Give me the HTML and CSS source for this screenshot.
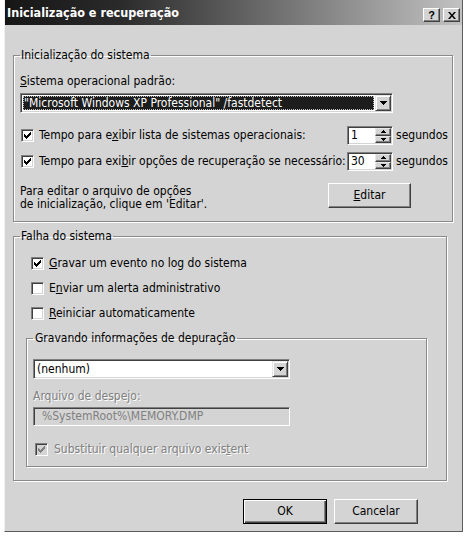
FILE: index.html
```html
<!DOCTYPE html>
<html lang="pt-BR">
<head>
<meta charset="utf-8">
<title>Inicialização e recuperação</title>
<link rel="stylesheet" href="styles.css">
</head>
<body>
<div class="dialog">
  <header class="titlebar">
    <span class="title">Inicialização e recuperação</span>
    <div class="tbtns">
      <span class="tbtn help">?</span>
      <span class="tbtn close"><svg width="8" height="7" viewBox="0 0 8 7"><path d="M0 0h2l2 2.4 2-2.4h2l-3 3.5 3 3.5h-2l-2-2.4-2 2.4h-2l3-3.5z"/></svg></span>
    </div>
  </header>
  <main class="content">
    <fieldset class="group g1">
      <legend>Inicialização do sistema</legend>
      <div class="lbl"><u>S</u>istema operacional padrão:</div>
      <div class="combo combo-os">
        <div class="combo-field"><span class="sel">"Microsoft Windows XP Professional" /fastdetect</span></div>
        <span class="drop"><svg width="7" height="4" viewBox="0 0 7 4"><path d="M0 0h7v1h-1v1h-1v1h-1v1h-1v-1h-1v-1h-1v-1h-1z"/></svg></span>
      </div>
      <div class="timerows">
        <div class="chk"><span class="box"><svg class="ck" width="9" height="9" viewBox="0 0 9 9"><path d="M1 3H2V4H3V5H4V4H5V3H6V2H7V1H8V4H7V5H6V6H5V7H4V8H3V7H2V6H1Z"/></svg></span><span>Tempo para e<u>x</u>ibir lista de sistemas operacionais:</span></div>
        <div class="spin"><span class="spin-val">1</span><span class="spin-btns"><span class="sb"><svg width="5" height="3" viewBox="0 0 5 3"><path d="M0 3h5v-1h-1v-1h-1v-1h-1v1h-1v1h-1z"/></svg></span><span class="sb"><svg width="5" height="3" viewBox="0 0 5 3"><path d="M0 0h5v1h-1v1h-1v1h-1v-1h-1v-1h-1z"/></svg></span></span></div>
        <span class="unit">segundos</span>
        <div class="chk"><span class="box"><svg class="ck" width="9" height="9" viewBox="0 0 9 9"><path d="M1 3H2V4H3V5H4V4H5V3H6V2H7V1H8V4H7V5H6V6H5V7H4V8H3V7H2V6H1Z"/></svg></span><span>Tempo para exi<u>b</u>ir opções de recuperação se necessário:</span></div>
        <div class="spin"><span class="spin-val">30</span><span class="spin-btns"><span class="sb"><svg width="5" height="3" viewBox="0 0 5 3"><path d="M0 3h5v-1h-1v-1h-1v-1h-1v1h-1v1h-1z"/></svg></span><span class="sb"><svg width="5" height="3" viewBox="0 0 5 3"><path d="M0 0h5v1h-1v1h-1v1h-1v-1h-1v-1h-1z"/></svg></span></span></div>
        <span class="unit">segundos</span>
      </div>
      <div class="editrow">
        <p class="note">Para editar o arquivo de opções<br>de inicialização, clique em 'Editar'.</p>
        <span class="btn btn-edit"><u>E</u>ditar</span>
      </div>
    </fieldset>

    <fieldset class="group g2">
      <legend>Falha do sistema</legend>
      <div class="checks">
        <div class="chk"><span class="box"><svg class="ck" width="9" height="9" viewBox="0 0 9 9"><path d="M1 3H2V4H3V5H4V4H5V3H6V2H7V1H8V4H7V5H6V6H5V7H4V8H3V7H2V6H1Z"/></svg></span><span><u>G</u>ravar um evento no log do sistema</span></div>
        <div class="chk"><span class="box"></span><span>E<u>n</u>viar um alerta administrativo</span></div>
        <div class="chk"><span class="box"></span><span><u>R</u>einiciar automaticamente</span></div>
      </div>
      <fieldset class="group g3">
        <legend>Gravando informações de depuração</legend>
        <div class="combo combo-dbg">
          <div class="combo-field"><span class="val">(nenhum)</span></div>
          <span class="drop"><svg width="7" height="4" viewBox="0 0 7 4"><path d="M0 0h7v1h-1v1h-1v1h-1v1h-1v-1h-1v-1h-1v-1h-1z"/></svg></span>
        </div>
        <div class="lbl dis dump-lbl">Arquivo de despejo:</div>
        <div class="textbox">%SystemRoot%\MEMORY.DMP</div>
        <div class="chk overwrite"><span class="box box-dis"><svg class="ck" width="9" height="9" viewBox="0 0 9 9"><path d="M1 3H2V4H3V5H4V4H5V3H6V2H7V1H8V4H7V5H6V6H5V7H4V8H3V7H2V6H1Z"/></svg></span><span class="dis">Substituir qualquer arquivo exis<u>t</u>ent</span></div>
      </fieldset>
    </fieldset>
  </main>
  <footer class="buttons">
    <span class="btn btn-default">OK</span>
    <span class="btn">Cancelar</span>
  </footer>
</div>
</body>
</html>
```

FILE: styles.css
```css
* { box-sizing: border-box; }

html, body {
  margin: 0;
  padding: 0;
  background: #ffffff;
}

body {
  font-family: "DejaVu Sans Condensed", "Liberation Sans", sans-serif;
  font-size: 12px;
  line-height: 13px;
  color: #000;
}

u { text-decoration: underline; text-underline-offset: 1px; }

.dialog {
  margin-left: 4px;
  width: 459px;
  height: 532px;
  background: #d4d4d4;
  border-left: 1px solid #f0f0f0;
  border-right: 1px solid #5c5c5c;
  border-bottom: 1px solid #5c5c5c;
  display: flex;
  flex-direction: column;
}

/* ---------- title bar ---------- */
.titlebar {
  height: 25px;
  flex: none;
  display: flex;
  align-items: flex-start;
  padding-left: 2px;
  padding-right: 2px;
  background: linear-gradient(to right, #161616 0%, #2a2a2a 25%, #c2c2c2 100%);
}

.title {
  color: #fff;
  font-family: "DejaVu Sans Condensed", "Liberation Sans", sans-serif;
  font-weight: bold;
  font-size: 12.5px;
  line-height: 25px;
  white-space: nowrap;
}

.tbtns {
  margin-left: auto;
  margin-top: 8px;
  display: flex;
  gap: 3px;
}

.tbtn {
  width: 17px;
  height: 14px;
  background: #d4d4d4;
  border: 1px solid;
  border-color: #fff #404040 #404040 #fff;
  box-shadow: inset -1px -1px 0 #808080;
  display: flex;
  align-items: center;
  justify-content: center;
  font-family: "Liberation Sans", sans-serif;
  font-weight: bold;
  font-size: 11px;
  line-height: 12px;
}

.tbtn svg { fill: #000; }

/* ---------- content ---------- */
.content {
  padding-left: 8px;
  display: flex;
  flex-direction: column;
  align-items: flex-start;
}

.group {
  margin: 0;
  border: 1px solid #8a8a8a;
  box-shadow: inset 1px 1px 0 #fff, 1px 1px 0 #fff;
  min-width: 0;
  min-inline-size: 0;
}

.group > legend {
  padding: 0 1px;
  margin: 0;
  line-height: 13px;
  white-space: nowrap;
}

.g1 {
  margin-top: 24px;
  width: 440px;
  padding: 13px 3px 10px 6px;
}

.lbl { white-space: nowrap; }

/* combo box */
.combo {
  display: flex;
  height: 20px;
  background: #fff;
  border: 1px solid;
  border-color: #808080 #fff #fff #808080;
  box-shadow: inset 1px 1px 0 #404040, inset -1px -1px 0 #d4d4d4;
  padding: 1px;
}

.combo-os {
  margin-top: 5px;
  width: 373px;
}

.combo-field {
  flex: 1;
  padding: 1px;
  min-width: 0;
}

.sel {
  display: block;
  height: 14px;
  background: #1c1c1c;
  color: #fff;
  line-height: 14px;
  padding-left: 1px;
  outline: 1px dotted #bdbdbd;
  outline-offset: -1px;
  white-space: nowrap;
  overflow: hidden;
}

.val {
  display: block;
  line-height: 14px;
  padding-left: 1px;
  white-space: nowrap;
}

.drop {
  width: 16px;
  height: 16px;
  flex: none;
  background: #d4d4d4;
  border: 1px solid;
  border-color: #e8e8e8 #404040 #404040 #e8e8e8;
  box-shadow: inset 1px 1px 0 #fff, inset -1px -1px 0 #808080;
  display: flex;
  align-items: center;
  justify-content: center;
}

.drop svg { fill: #000; shape-rendering: crispEdges; }

/* timeout rows */
.timerows {
  margin-top: 13px;
  display: grid;
  grid-template-columns: 327px 46px auto;
  grid-auto-rows: 19px;
  row-gap: 7px;
  align-items: center;
}

.chk {
  display: flex;
  align-items: center;
  gap: 5px;
  white-space: nowrap;
  line-height: 13px;
}

.timerows .chk { padding-left: 1px; }

.box {
  width: 13px;
  height: 13px;
  flex: none;
  background: #fff;
  border: 1px solid;
  border-color: #808080 #fff #fff #808080;
  box-shadow: inset 1px 1px 0 #404040, inset -1px -1px 0 #d4d4d4;
  padding: 1px;
  display: flex;
}

.ck { fill: #000; shape-rendering: crispEdges; }

.box-dis { background: #d4d4d4; }
.box-dis .ck { fill: #808080; }

.spin {
  height: 19px;
  width: 46px;
  display: flex;
  background: #fff;
  border: 1px solid;
  border-color: #808080 #fff #fff #808080;
  box-shadow: inset 1px 1px 0 #404040, inset -1px -1px 0 #d4d4d4;
  padding: 1px;
}

.spin-val {
  flex: 1;
  padding-left: 2px;
  line-height: 15px;
}

.spin-btns {
  width: 16px;
  display: flex;
  flex-direction: column;
}

.sb {
  flex: 1;
  background: #d4d4d4;
  border: 1px solid;
  border-color: #e8e8e8 #404040 #404040 #e8e8e8;
  box-shadow: inset -1px -1px 0 #808080;
  display: flex;
  align-items: center;
  justify-content: center;
}

.sb svg { fill: #000; shape-rendering: crispEdges; }

.unit {
  margin-left: 3px;
  white-space: nowrap;
}

/* edit row */
.editrow {
  margin-top: 12px;
  display: flex;
  align-items: flex-start;
}

.note {
  margin: 2px 0 0 0;
  white-space: nowrap;
}

.btn {
  width: 84px;
  height: 25px;
  background: #d4d4d4;
  border: 1px solid;
  border-color: #fff #404040 #404040 #fff;
  box-shadow: inset -1px -1px 0 #808080;
  display: flex;
  align-items: center;
  justify-content: center;
  white-space: nowrap;
}

.btn-edit {
  width: 83px;
  margin-left: auto;
  margin-right: 38px;
}

.btn-default {
  border-color: #000;
  box-shadow: inset 1px 1px 0 #fff, inset -1px -1px 0 #404040, inset -2px -2px 0 #808080;
}

/* group 2 */
.g2 {
  margin-top: 8px;
  width: 434px;
  padding: 14px 3px 13px 6px;
}

.checks {
  margin-left: 11px;
  display: flex;
  flex-direction: column;
  gap: 12px;
}

/* group 3 */
.g3 {
  margin-top: 12px;
  margin-left: 6px;
  width: 401px;
  padding: 14px 3px 10px 6px;
}

.g3 > legend { padding: 0 2px; }

.combo-dbg { width: 257px; }

.dis {
  color: #808080;
  text-shadow: 1px 1px 0 #fff;
}

.dump-lbl { margin-top: 11px; }

.textbox {
  margin-top: 4px;
  width: 257px;
  height: 19px;
  background: #d4d4d4;
  border: 1px solid;
  border-color: #808080 #fff #fff #808080;
  box-shadow: inset 1px 1px 0 #404040, inset -1px -1px 0 #d4d4d4;
  padding-left: 8px;
  line-height: 17px;
  color: #808080;
  white-space: nowrap;
}

.overwrite {
  margin-top: 17px;
  margin-left: 2px;
  gap: 6px;
}

/* bottom buttons */
.buttons {
  margin-top: 18px;
  display: flex;
  justify-content: flex-end;
  gap: 7px;
  padding-right: 44px;
}
```
